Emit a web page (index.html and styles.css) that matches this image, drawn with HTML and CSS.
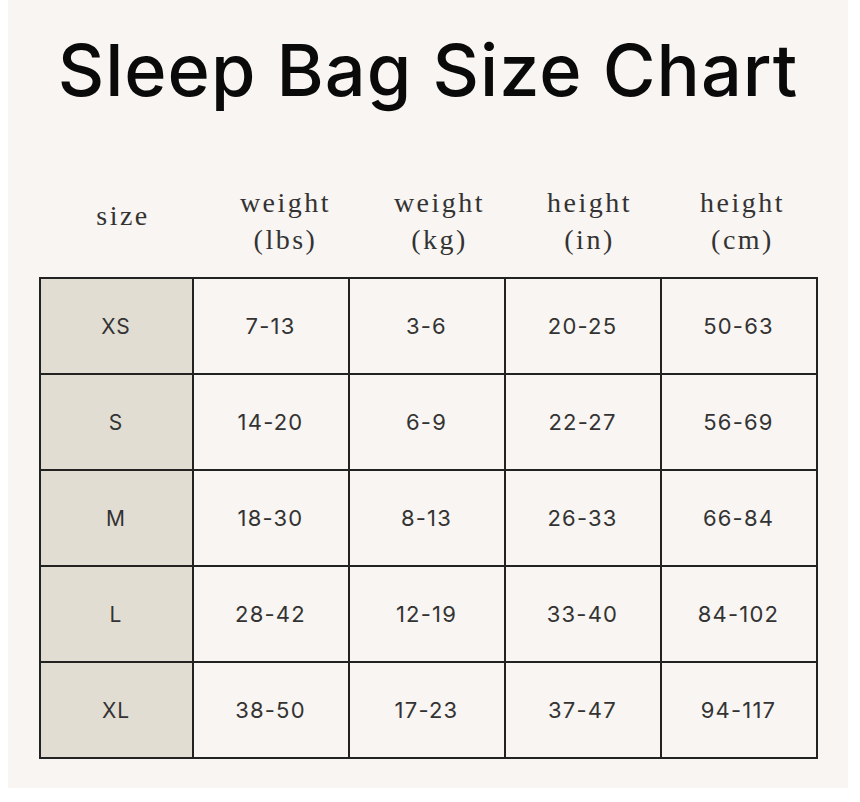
FILE: index.html
```html
<!DOCTYPE html>
<html lang="en">
<head>
<meta charset="utf-8">
<title>Sleep Bag Size Chart</title>
<link rel="stylesheet" href="styles.css">
</head>
<body>
<main class="panel">
  <h1 class="title">Sleep Bag Size Chart</h1>
  <table class="chart">
    <colgroup>
      <col class="c-size"><col class="c-val"><col class="c-val"><col class="c-val"><col class="c-val">
    </colgroup>
    <thead>
      <tr>
        <th class="h-size">size</th>
        <th class="h-lbs">weight<br>(lbs)</th>
        <th class="h-kg">weight<br>(kg)</th>
        <th class="h-in">height<br>(in)</th>
        <th class="h-cm">height<br>(cm)</th>
      </tr>
    </thead>
    <tbody>
      <tr><td class="size">XS</td><td>7-13</td><td>3-6</td><td>20-25</td><td>50-63</td></tr>
      <tr><td class="size">S</td><td>14-20</td><td>6-9</td><td>22-27</td><td>56-69</td></tr>
      <tr><td class="size">M</td><td>18-30</td><td>8-13</td><td>26-33</td><td>66-84</td></tr>
      <tr><td class="size">L</td><td>28-42</td><td>12-19</td><td>33-40</td><td>84-102</td></tr>
      <tr><td class="size">XL</td><td>38-50</td><td>17-23</td><td>37-47</td><td>94-117</td></tr>
    </tbody>
  </table>
</main>
</body>
</html>
```
FILE: styles.css
```css
html, body {
  margin: 0;
  padding: 0;
  background: #ffffff;
}
body {
  padding: 0 8px;
}
.panel {
  display: block;
  width: 840px;
  background: #f8f5f2;
  height: 788px;
  padding-top: 27px;
  box-sizing: border-box;
}
.title {
  margin: 0;
  font-family: "Inter", "Lato", sans-serif;
  font-weight: 500;
  font-size: 72px;
  line-height: 86px;
  text-align: center;
  color: #0a0a0a;
  letter-spacing: 1px;
}
.chart {
  margin: 71px auto 0;
  width: 778px;
  border-collapse: collapse;
  table-layout: fixed;
}
.c-size { width: 153px; }
.c-val { width: 156px; }
.chart th {
  font-family: "Liberation Serif", serif;
  font-weight: normal;
  font-size: 28px;
  line-height: 37px;
  letter-spacing: 2.5px;
  color: #333;
  padding: 0 0 19px;
  text-align: center;
  vertical-align: middle;
}
.chart th.h-size {
  padding-bottom: 31px;
  padding-left: 14px;
}
.chart th.h-lbs { padding-left: 30px; }
.chart th.h-kg { padding-left: 26px; }
.chart th.h-in { padding-left: 14px; }
.chart th.h-cm { padding-left: 8px; }
.chart td {
  border: 2px solid #222;
  height: 96px;
  padding: 0;
  box-sizing: border-box;
  text-align: center;
  vertical-align: middle;
  font-family: "Inter", sans-serif;
  font-size: 22px;
  letter-spacing: 1.2px;
  color: #333;
  background: #f8f5f2;
}
.chart td.size {
  background: #e1ddd3;
  font-size: 21px;
  letter-spacing: 1px;
}
```
